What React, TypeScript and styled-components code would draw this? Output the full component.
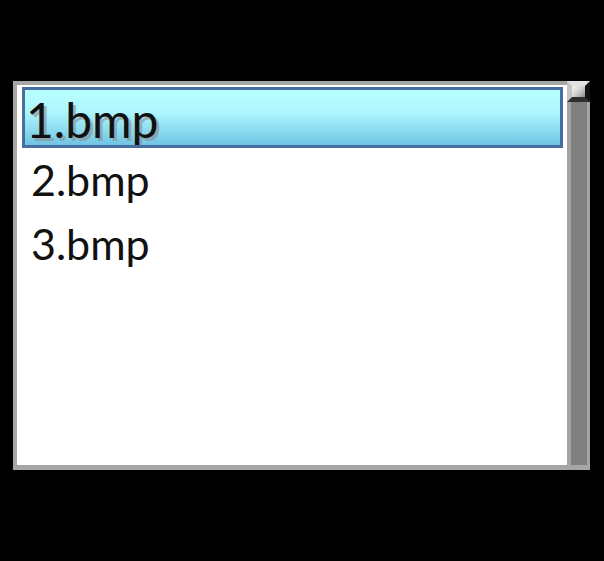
import React from "react";
import styled, { createGlobalStyle } from "styled-components";

const Global = createGlobalStyle`
  html, body { margin: 0; padding: 0; background: #000; }
  body { width: 604px; height: 561px; overflow: hidden; font-family: Lato, "Noto Sans", sans-serif; }
`;

const Page = styled.div`
  width: 604px;
  height: 561px;
  box-sizing: border-box;
  padding: 81px 0 0 13px;
  background: #000;
`;

const Frame = styled.div`
  width: 577px;
  height: 389px;
  box-sizing: border-box;
  display: flex;
  flex-direction: column;
  border-bottom: 5px solid #a6a6a6;
`;

const Body = styled.div`
  flex: 1;
  display: flex;
  min-height: 0;
`;

const ListArea = styled.div`
  flex: 1;
  background: #fff;
  border-left: 4px solid #a6a6a6;
  border-top: 4px solid #a6a6a6;
  padding: 2px 4px 0 5px;
  display: flex;
  flex-direction: column;
`;

const Row = styled.div<{ $selected?: boolean }>`
  box-sizing: border-box;
  font-family: Lato, "Noto Sans", sans-serif;
  color: #111;
  white-space: nowrap;
  overflow: hidden;
  ${(p) =>
    p.$selected
      ? `
    height: 61px;
    border: 3px solid #466e9e;
    background: linear-gradient(180deg, #b8ffff 0%, #aef6fe 40%, #70c4e4 100%);
    font-size: 48px;
    line-height: 59px;
    padding-left: 1px;
    text-shadow: 3px 3px 0.5px rgba(140,140,140,0.6);
  `
      : `
    height: 64px;
    font-size: 43px;
    line-height: 64px;
    padding-left: 9px;
  `}
`;

const Scrollbar = styled.div`
  width: 23px;
  display: flex;
  flex-direction: column;
`;

const ArrowButton = styled.div`
  height: 21px;
  box-sizing: border-box;
  border-top: 5px solid #e2e2e2;
  border-left: 5px solid #c4c4c4;
  border-right: 5px solid #111;
  border-bottom: 5px solid #2e2e2e;
  background: linear-gradient(135deg, #f6f6f6 0%, #d0d0d0 50%, #8a8a8a 100%);
`;

const Track = styled.div`
  flex: 1;
  box-sizing: border-box;
  background: #808080;
  border-left: 4px solid #a4a4a4;
  border-right: 3px solid #a4a4a4;
`;

const items = ["1.bmp", "2.bmp", "3.bmp"];

export default function App() {
  return (
    <Page>
      <Global />
      <Frame>
        <Body>
          <ListArea>
            {items.map((it, i) => (
              <Row key={it} $selected={i === 0}>
                {it}
              </Row>
            ))}
          </ListArea>
          <Scrollbar>
            <ArrowButton />
            <Track />
          </Scrollbar>
        </Body>
      </Frame>
    </Page>
  );
}
